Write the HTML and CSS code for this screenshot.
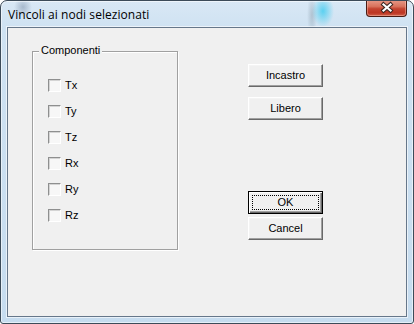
FILE: index.html
```html
<!DOCTYPE html>
<html lang="it">
<head>
<meta charset="utf-8">
<title>Vincoli ai nodi selezionati</title>
<link rel="stylesheet" href="styles.css">
</head>
<body>
<div class="window">
  <div class="titlebar">
    <span class="title">Vincoli ai nodi selezionati</span>
    <div class="close">
      <svg width="41" height="17" viewBox="0 0 41 17" aria-hidden="true">
        <path d="M17.5 4.5 L24.5 10.5 M24.5 4.5 L17.5 10.5" stroke="#3a2520" stroke-width="4.2" stroke-linecap="square" fill="none"/>
        <path d="M17.5 4.5 L24.5 10.5 M24.5 4.5 L17.5 10.5" stroke="#ffffff" stroke-width="2.2" stroke-linecap="square" fill="none"/>
      </svg>
    </div>
  </div>
  <div class="client">
    <div class="group">
      <span class="legend">Componenti</span>
      <ul class="checks">
        <li class="check"><span class="box"></span><span class="label">Tx</span></li>
        <li class="check"><span class="box"></span><span class="label">Ty</span></li>
        <li class="check"><span class="box"></span><span class="label">Tz</span></li>
        <li class="check"><span class="box"></span><span class="label">Rx</span></li>
        <li class="check"><span class="box"></span><span class="label">Ry</span></li>
        <li class="check"><span class="box"></span><span class="label">Rz</span></li>
      </ul>
    </div>
    <div class="buttons">
      <div class="btn">Incastro</div>
      <div class="btn btn-libero">Libero</div>
      <div class="btn btn-default btn-ok"><span class="focus">OK</span></div>
      <div class="btn btn-cancel">Cancel</div>
    </div>
  </div>
</div>
</body>
</html>
```

FILE: styles.css
```css
html, body {
  margin: 0;
  padding: 0;
  background: #ffffff;
}

.window {
  box-sizing: border-box;
  width: 414px;
  height: 324px;
  border: 1px solid #3c4b59;
  border-radius: 7px 7px 3px 3px;
  background:
    radial-gradient(ellipse 11px 16px at 322px 10px, rgba(70, 205, 240, 0.85), rgba(70, 205, 240, 0) 100%),
    radial-gradient(ellipse 5px 22px at 311px 14px, rgba(140, 160, 175, 0.5), rgba(140, 160, 175, 0) 100%),
    radial-gradient(ellipse 9px 10px at 22px 6px, rgba(120, 140, 165, 0.5), rgba(120, 140, 165, 0) 100%),
    linear-gradient(to bottom, #d9e8f5 0px, #cfe2f2 26px, #c6dcef 100%);
  box-shadow: inset 0 0 0 1px rgba(255, 255, 255, 0.55);
  display: flex;
  flex-direction: column;
  overflow: hidden;
}

.titlebar {
  height: 26px;
  display: flex;
  justify-content: space-between;
  align-items: flex-start;
}

.title {
  font-family: "Open Sans", "Noto Sans", sans-serif;
  font-size: 12px;
  line-height: 16px;
  color: #000;
  margin: 6px 0 0 7px;
  letter-spacing: 0.05px;
}

.close {
  width: 41px;
  height: 17px;
  margin-right: 6px;
  margin-top: -1px;
  box-sizing: border-box;
  border: 1px solid #4a1c14;
  border-top: 0;
  border-radius: 0 0 4px 4px;
  background: linear-gradient(to bottom, #e79a88 0%, #d9735d 40%, #c44430 55%, #bd3623 80%, #d0604a 100%);
  box-shadow: inset 0 0 0 1px rgba(255, 210, 195, 0.4);
  position: relative;
}

.close svg {
  position: absolute;
  left: -1px;
  top: 0;
}

.client {
  box-sizing: border-box;
  height: 290px;
  margin: 0 6px;
  border: 1px solid #66778a;
  background: #f0f0f0;
  box-shadow: 0 0 0 1px rgba(255, 255, 255, 0.6);
  display: flex;
  align-items: flex-start;
  font-family: "Liberation Sans", Arial, sans-serif;
  font-size: 11px;
  color: #000;
}

.group {
  position: relative;
  box-sizing: border-box;
  width: 146px;
  height: 199px;
  margin: 23px 0 0 24px;
  border: 1px solid #a0a0a0;
  box-shadow: inset 1px 1px 0 #ffffff, 1px 1px 0 #ffffff;
}

.legend {
  position: absolute;
  top: -8px;
  left: 6px;
  padding: 0 2px;
  line-height: 13px;
  background: #f0f0f0;
}

.checks {
  list-style: none;
  margin: 27px 0 0 15px;
  padding: 0;
  display: flex;
  flex-direction: column;
  gap: 13px;
}

.check {
  display: flex;
  align-items: flex-start;
  height: 13px;
  line-height: 13px;
}

.box {
  box-sizing: border-box;
  width: 13px;
  height: 13px;
  border: 1px solid;
  border-color: #8e8f8f #ffffff #ffffff #8e8f8f;
  background: #f7f7f7;
  box-shadow: inset 1px 1px 0 #d4d4d4;
}

.label {
  margin-left: 4px;
}

.buttons {
  display: flex;
  flex-direction: column;
  margin: 36px 0 0 70px;
}

.btn {
  box-sizing: border-box;
  width: 75px;
  height: 23px;
  border: 1px solid;
  border-color: #ffffff #696969 #696969 #ffffff;
  box-shadow: inset -1px -1px 0 #a0a0a0, inset 1px 1px 0 #f4f4f4;
  background: #f0f0f0;
  text-align: center;
  line-height: 21px;
}

.btn-libero {
  margin-top: 10px;
}

.btn-ok {
  margin-top: 71px;
}

.btn-cancel {
  margin-top: 3px;
}

.btn-default {
  border: 1px solid #000000;
  box-shadow: inset 1px 1px 0 #ffffff, inset -1px -1px 0 #696969, inset -2px -2px 0 #a0a0a0;
  display: flex;
  padding: 3px;
}

.focus {
  flex: 1;
  border: 1px dotted #000000;
  line-height: 13px;
}
```
